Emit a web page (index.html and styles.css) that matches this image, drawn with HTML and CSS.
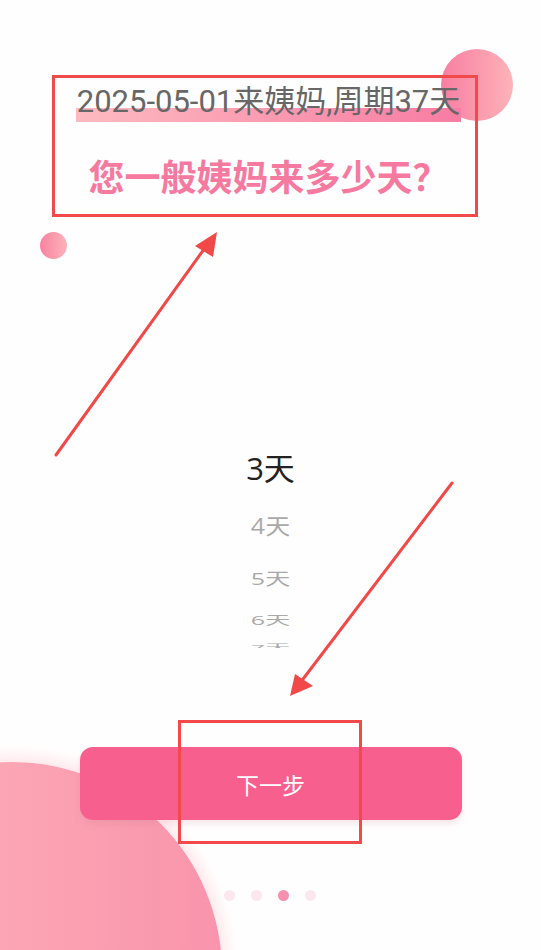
FILE: index.html
```html
<!DOCTYPE html>
<html lang="zh-CN">
<head>
<meta charset="utf-8">
<title>经期设置</title>
<link rel="stylesheet" href="styles.css">
</head>
<body>
<div class="screen">
  <div class="deco deco-tr"></div>
  <div class="deco deco-l"></div>
  <div class="deco deco-bl"></div>

  <main class="content">
    <header class="head">
      <p class="date-line"><span class="date-mark">2025-05-01来姨妈,周期37天</span></p>
      <h1 class="question">您一般姨妈来多少天？</h1>
    </header>

    <div class="picker">
      <div class="pick-item pick-sel">3天</div>
      <div class="pick-item pick-1"><span>4天</span></div>
      <div class="pick-item pick-2"><span>5天</span></div>
      <div class="pick-item pick-3"><span>6天</span></div>
      <div class="pick-item pick-4"><span>7天</span></div>
    </div>

    <button class="next-btn" type="button">下一步</button>

    <div class="dots">
      <span class="dot"></span>
      <span class="dot"></span>
      <span class="dot dot-active"></span>
      <span class="dot"></span>
    </div>
  </main>

  <div class="annot annot-top"></div>
  <div class="annot annot-btn"></div>

  <svg class="arrows" width="541" height="950" viewBox="0 0 541 950" aria-hidden="true">
    <line x1="56" y1="455" x2="207" y2="245" stroke="#f24848" stroke-width="3" stroke-linecap="round"/>
    <polygon points="217,232 195,246 213,257" fill="#f24848"/>
    <line x1="452" y1="483" x2="300" y2="683" stroke="#f24848" stroke-width="3" stroke-linecap="round"/>
    <polygon points="290,696 295,674 313,686" fill="#f24848"/>
  </svg>
</div>
</body>
</html>
```

FILE: styles.css
```css
* { box-sizing: border-box; }

html, body {
  margin: 0;
  padding: 0;
  background: #ffffff;
}

.screen {
  position: relative;
  width: 541px;
  height: 950px;
  overflow: hidden;
  background: #fffefe;
  font-family: Roboto, "Noto Sans CJK SC", sans-serif;
}

.content {
  position: relative;
  z-index: 2;
  display: flex;
  flex-direction: column;
  align-items: center;
}

.head {
  display: flex;
  flex-direction: column;
  align-items: center;
  padding-top: 82px;
  padding-right: 4px;
}

.date-line {
  margin: 0;
  font-size: 31px;
  line-height: 40px;
  color: #676767;
}

.date-mark {
  display: inline-block;
  padding: 0 1px;
  line-height: 40px;
  background: linear-gradient(to right, #fdbac0, #f87ca3) no-repeat;
  background-size: 100% 14px;
  background-position: 0 26px;
}

.question {
  margin: 31px 0 0 0;
  font-family: "Noto Sans CJK SC", sans-serif;
  font-size: 36px;
  line-height: 44px;
  font-weight: 700;
  color: #f67aa0;
}

.picker {
  margin-top: 240px;
  height: 211px;
  overflow: hidden;
  display: flex;
  flex-direction: column;
  align-items: center;
  font-family: "Open Sans", "Noto Sans CJK SC", sans-serif;
}

.pick-item {
  flex-shrink: 0;
  display: flex;
  align-items: center;
  justify-content: center;
  color: #a9a9a9;
  font-size: 25px;
  white-space: nowrap;
}

.pick-item span { display: inline-block; }

.pick-sel {
  height: 58px;
  font-size: 31px;
  color: #222222;
}

.pick-1 { height: 58px; }
.pick-1 span { transform: scaleY(0.88); }

.pick-2 { height: 50px; }
.pick-2 span { transform: scaleY(0.66); }

.pick-3 { height: 32px; }
.pick-3 span { transform: scaleY(0.5); }

.pick-4 { height: 24px; }
.pick-4 span { transform: scaleY(0.3); }

.next-btn {
  margin-top: 99px;
  width: 382px;
  height: 73px;
  border: none;
  border-radius: 13px;
  background: #f7608e;
  color: #ffffff;
  font-family: "Noto Sans CJK SC", sans-serif;
  font-size: 23px;
  box-shadow: 0 4px 6px rgba(200, 120, 140, 0.18);
}

.dots {
  margin-top: 70px;
  display: flex;
  gap: 16px;
  padding-right: 2px;
}

.dot {
  width: 11px;
  height: 11px;
  border-radius: 50%;
  background: #fbe7ed;
}

.dot-active { background: #f590ae; }

/* decorations */
.deco {
  position: absolute;
  border-radius: 50%;
  z-index: 1;
}

.deco-tr {
  left: 441px;
  top: 49px;
  width: 72px;
  height: 72px;
  background: linear-gradient(to right, #f87ea2, #fdb3b8);
}

.deco-l {
  left: 40px;
  top: 232px;
  width: 27px;
  height: 27px;
  background: linear-gradient(to right, #f7849f, #fcb2ba);
}

.deco-bl {
  left: -198px;
  top: 762px;
  width: 420px;
  height: 420px;
  background: linear-gradient(to right, #feb6bb, #f994ac);
  box-shadow: 0 0 14px 6px rgba(255, 215, 222, 0.6);
}

/* annotations */
.annot {
  position: absolute;
  z-index: 3;
  border: 3px solid #f24a4a;
}

.annot-top {
  left: 52px;
  top: 75px;
  width: 426px;
  height: 142px;
}

.annot-btn {
  left: 178px;
  top: 720px;
  width: 184px;
  height: 124px;
}

.arrows {
  position: absolute;
  left: 0;
  top: 0;
  z-index: 4;
}
```
